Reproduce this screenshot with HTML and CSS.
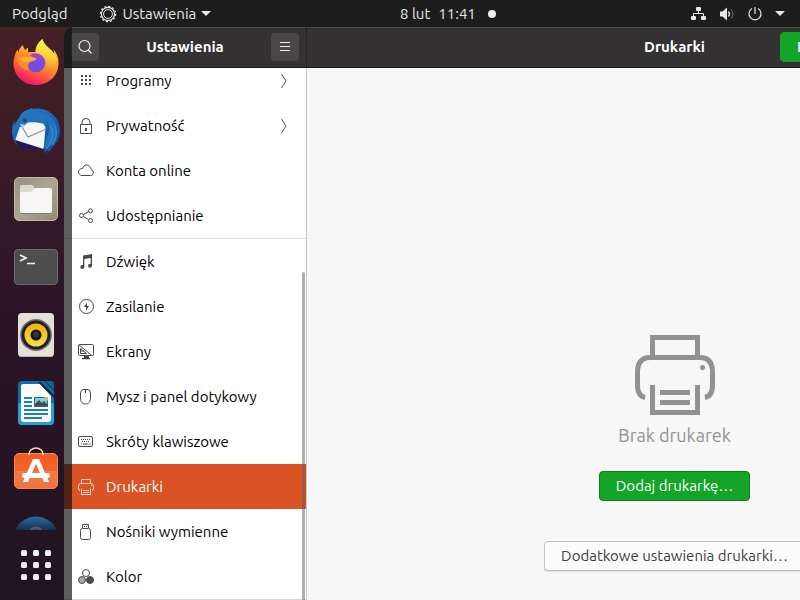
FILE: index.html
```html
<!DOCTYPE html>
<html lang="pl">
<head>
<meta charset="utf-8">
<title>Ustawienia</title>
<link rel="stylesheet" href="styles.css">
</head>
<body>
<header class="topbar">
  <div class="topbar-left">
    <button class="panel-button">Podgląd</button>
    <button class="panel-button app-menu">
      <svg width="18" height="18" viewBox="0 0 18 18" fill="none" stroke="currentColor"><circle cx="9" cy="9" r="6.6" stroke-width="1.2"/><circle cx="9" cy="9" r="4.4" stroke-width="1"/><circle cx="9" cy="9" r="7.6" stroke-width="1.2" stroke-dasharray="2 1.98"/></svg>
      <span>Ustawienia</span>
      <svg width="10" height="6" viewBox="0 0 10 6"><path d="M0 0h10L5 5z" fill="currentColor"/></svg>
    </button>
  </div>
  <div class="topbar-right">
    <button class="panel-button clock"><span>8 lut</span><span>11:41</span><i class="dot"></i></button>
    <button class="panel-button status" aria-label="Stan systemu">
      <svg width="16" height="16" viewBox="0 0 16 16" fill="currentColor"><rect x="5" y="1" width="5" height="4" rx="1"/><rect x="0" y="10" width="5" height="4" rx="1"/><rect x="10" y="10" width="5" height="4" rx="1"/><path d="M2.500 10.500V7.500h10v3M7.500 5v3" fill="none" stroke="currentColor"/></svg>
      <svg width="16" height="16" viewBox="0 0 16 16"><path d="M1 5.500h2.500L8 1.500v13l-4.500-4H1z" fill="currentColor"/><path d="M9.500 5.500q2 2.500 0 5" fill="none" stroke="currentColor" stroke-width="1.300"/><path d="M12 3.500q4 4.500 0 9" fill="none" stroke="#777"/></svg>
      <svg width="16" height="16" viewBox="0 0 16 16" fill="none" stroke="currentColor" stroke-width="1.200"><path d="M5 2.600a6 6 0 1 0 6 0M8 1v7"/></svg>
      <svg width="10" height="6" viewBox="0 0 10 6"><path d="M0 0h10L5 5z" fill="currentColor"/></svg>
    </button>
  </div>
</header>

<div class="desktop">
  <nav class="dock" aria-label="Dok">
    <div class="dock-apps">
      <button class="dock-item" aria-label="Firefox">
        <svg width="48" height="48" viewBox="0 0 48 48">
          <defs>
            <linearGradient id="fx" x1=".8" y1=".05" x2=".35" y2="1"><stop offset="0" stop-color="#fff04a"/><stop offset=".35" stop-color="#ffae2c"/><stop offset=".65" stop-color="#ff6a36"/><stop offset=".85" stop-color="#ff3650"/><stop offset="1" stop-color="#e8127a"/></linearGradient>
            <linearGradient id="fy" x1=".5" y1="0" x2=".4" y2="1"><stop offset="0" stop-color="#fff34f"/><stop offset=".5" stop-color="#ffd03a"/><stop offset="1" stop-color="#ff8a30" stop-opacity="0"/></linearGradient>
            <linearGradient id="fp" x1=".6" y1="0" x2=".5" y2="1"><stop offset="0" stop-color="#a43fd6"/><stop offset=".5" stop-color="#7a4be8"/><stop offset="1" stop-color="#6d50d8"/></linearGradient>
          </defs>
          <path d="M10.500 6C8 8.500 6.500 11 6.500 14l-1-3.500C3 14 1.500 20 1.500 25 2 37 11.500 46 24 46c13 0 22.500-9.500 22.500-22 0-5.500-2-10-5-13.500l1 5C39 9.500 32 7 30.500 0c-5 4-7 8-7 13L16 13V8.500l-3 2.500z" fill="url(#fx)"/>
          <path d="M30.500 0c-6 5-7.500 10-6.500 15 6 .5 10 4 10 10 0 4-2 7-5 9 8 0 14-5 15.500-12 .5-3-.5-5-2-7C39 9.500 32 7 30.500 0z" fill="url(#fy)"/>
          <circle cx="23.700" cy="23.800" r="9.500" fill="url(#fp)"/>
          <path d="M5 17c3-3 7-3.500 11-3.500 1.500 3 4 5 8.500 6-1 3-5 2.500-7 4-2 2-2 5 0 8-6 0-10.500-5-12.500-10z" fill="#ff8a2b"/>
          <path d="M7 19c5-1 12-1.500 17.500.5-2 2.500-5 2-8 3.500-4 .5-7-.5-9.500-4z" fill="#ffae35"/>
        </svg>
      </button>
      <button class="dock-item" aria-label="Thunderbird">
        <svg width="48" height="48" viewBox="0 0 48 48">
          <defs><linearGradient id="tb" x1=".2" y1="0" x2=".8" y2="1"><stop offset="0" stop-color="#2a7bc8"/><stop offset=".5" stop-color="#1b5fb4"/><stop offset="1" stop-color="#1c4a98"/></linearGradient></defs>
          <path d="M17 2.500c1-1 2-1.500 4-1.500l-1 1C35-1 48 9 48 24c0 9-5 14-9 18l-4 5 1-4-5 3 2-5-19-2v4C5 41 0 33 0 24c0-3 1-8 3-11l-1 6L8 9c2-4 5-6 9-6.500z" fill="url(#tb)"/>
          <path d="M3 32l15 4 13 6H15l-3 1C7 41 4 37 3 32z" fill="#211a55"/>
          <path d="M9.300 16C14 16 20 14 31 16.500L33.500 20 31.700 42 3.300 33z" fill="#f6f6f6"/>
          <path d="M9.500 19l6.500 11 17-7.500" fill="none" stroke="#8c9098" stroke-width="1.200"/>
          <path d="M8 20C7 12 11 5 18 3.500c8 0 15 4 16.500 15L30 16c-4-2-10-2.500-15 0-2 2-4 4-7 4z" fill="#2474c2"/>
          <path d="M23 7c8 1 16 8 14 18l-6 17C43 39 48 27 43 15 38 7 31 5 23 7z" fill="#2272bd"/>
          <path d="M38 18c5 8 2 18-4 24M43 19c3 8 1 14-3 19" fill="none" stroke="#3088cc" stroke-width="1.500"/>
          <path d="M8 17l6 1-4 3z" fill="#9bd8ee"/><circle cx="12.700" cy="13.300" r="2" fill="#2e4668"/>
        </svg>
      </button>
      <button class="dock-item" aria-label="Pliki">
        <svg width="48" height="48" viewBox="0 0 48 48">
          <defs><linearGradient id="fi" x1="0" y1="0" x2="1" y2="1"><stop offset="0" stop-color="#968f80"/><stop offset=".5" stop-color="#aca592"/><stop offset="1" stop-color="#918a7a"/></linearGradient></defs>
          <rect x="2.500" y="2.500" width="43" height="43" rx="4.500" fill="url(#fi)" stroke="#c0b9a8"/>
          <path d="M8 32V12q0-2 2-2h10q1 0 2 2l1 2h15q1 0 1 2v6z" fill="#dcd8d0"/>
          <path d="M8 19q0-2 2-2h8q1 0 3-2t3-2h14q2 0 2 2v21q0 2-2 2H10q-2 0-2-2z" fill="#f7f6f4"/>
          <path d="M9 38.500h30" stroke="#857e6f"/>
        </svg>
      </button>
      <button class="dock-item" aria-label="Terminal">
        <svg width="48" height="48" viewBox="0 0 48 48"><rect x="2.500" y="6.500" width="43" height="35" rx="3.500" fill="#4d4d4d" stroke="#6b6b6b"/><path d="M8 12l6 3-6 3" fill="none" stroke="#f2f2f2" stroke-width="1.700"/><path d="M15 20.500h8" stroke="#f2f2f2" stroke-width="1.500"/></svg>
      </button>
      <button class="dock-item" aria-label="Rhythmbox">
        <svg width="48" height="48" viewBox="0 0 48 48"><defs><linearGradient id="rb" x1="0" y1="0" x2="0" y2="1"><stop offset="0" stop-color="#efb40d"/><stop offset="1" stop-color="#fbdc46"/></linearGradient></defs><rect x="6" y="2" width="36" height="44" rx="4" fill="#e5e0d6"/><path d="M8 45.500h32" stroke="#b9b3a8"/><circle cx="24" cy="24" r="16" fill="#777"/><circle cx="24" cy="24" r="14.500" fill="#211e30"/><circle cx="24" cy="24" r="11.500" fill="url(#rb)"/><circle cx="24" cy="24" r="5.500" fill="#15151a"/><circle cx="24" cy="23.500" r="3" fill="#353535"/></svg>
      </button>
      <button class="dock-item" aria-label="LibreOffice Writer">
        <svg width="48" height="48" viewBox="0 0 48 48"><path d="M10 2h22l10 10v30q0 4-4 4H10q-4 0-4-4V6q0-4 4-4z" fill="#0d71a8"/><path d="M6 24h36v18q0 4-4 4H10q-4 0-4-4z" fill="#279fd8"/><path d="M33 2h6q3 0 3 3v6z" fill="#126293"/><path d="M11 5h17l11 12v23q0 3-3 3H12q-3 0-3-3V7q0-2 2-2z" fill="#fafafa"/><path d="M26 3h3l13 13v3z" fill="#10283e"/><path d="M12 19h8M12 23h8M12 27h8M12 31h24M12 35h24M12 39h18" stroke="#1d80ae" stroke-width="2"/><rect x="22.500" y="18.500" width="13" height="9" fill="#83c9ed" stroke="#14719e"/><path d="M23 27v-2l4-4 3 3 2-2 3 3v2z" fill="#4a4a43"/><path d="M32 18h4v4z" fill="#f0bc25"/></svg>
      </button>
      <button class="dock-item" aria-label="Ubuntu Software">
        <svg width="48" height="48" viewBox="0 0 48 48"><defs><linearGradient id="so" x1="0" y1="0" x2="0" y2="1"><stop offset="0" stop-color="#f4591f"/><stop offset=".5" stop-color="#f2652f"/><stop offset=".51" stop-color="#f47943"/><stop offset="1" stop-color="#ef7340"/></linearGradient></defs><rect x="2.500" y="6.500" width="43" height="35" rx="4.500" fill="url(#so)" stroke="#f58a58"/><path d="M17 8V7a7 6 0 0 1 14 0v1" fill="none" stroke="#f7deb0" stroke-width="1.600"/><path d="M21 12h6l10 23h-5l-1.500-4h-13L16 35h-5zM24 17l-4 9h8z" fill="#fff" fill-rule="evenodd"/><rect x="10" y="26" width="28" height="5" rx="2.500" fill="#fff"/></svg>
      </button>
      <button class="dock-item" aria-label="Pomoc">
        <svg width="48" height="48" viewBox="0 0 48 48"><defs><linearGradient id="he" x1="0" y1="0" x2="0" y2="1"><stop offset="0" stop-color="#2d69a2"/><stop offset=".3" stop-color="#172f4e"/></linearGradient></defs><circle cx="24" cy="24" r="22.500" fill="url(#he)"/><path d="M19 17q0-4 5-4t5 4q0 3-4 5v4" fill="none" stroke="#54596b" stroke-width="3"/></svg>
      </button>
    </div>
    <button class="show-apps" aria-label="Programy">
      <svg width="30" height="30" viewBox="0 0 30 30" fill="#eee"><rect width="6" height="6" rx="1.500"/><rect x="12" width="6" height="6" rx="1.500"/><rect x="24" width="6" height="6" rx="1.500"/><rect y="12" width="6" height="6" rx="1.500"/><rect x="12" y="12" width="6" height="6" rx="1.500"/><rect x="24" y="12" width="6" height="6" rx="1.500"/><rect y="24" width="6" height="6" rx="1.500"/><rect x="12" y="24" width="6" height="6" rx="1.500"/><rect x="24" y="24" width="6" height="6" rx="1.500"/></svg>
    </button>
  </nav>

  <div class="window">
    <aside class="sidebar">
      <div class="headerbar">
        <button class="header-button" aria-label="Szukaj"><svg width="16" height="16" viewBox="0 0 16 16" fill="none" stroke="currentColor" stroke-width="1.200"><circle cx="7.500" cy="7" r="5.500"/><path d="M11.300 11l3.200 3.500"/></svg></button>
        <h1>Ustawienia</h1>
        <button class="header-button" aria-label="Menu"><svg width="16" height="16" viewBox="0 0 16 16" stroke="currentColor"><path d="M3 3.500h10M3 7.500h10M3 11.500h10"/></svg></button>
      </div>
      <div class="list-area">
        <ul class="list">
          <li><a href="#programy"><svg class="icon" viewBox="0 0 16 16"><path d="M3 3h2M7 3h2M11 3h2M3 7h2M7 7h2M11 7h2M3 11h2M7 11h2M11 11h2" stroke-width="2"/></svg><span>Programy</span><svg class="chevron" viewBox="0 0 8 16"><path d="M1.500 1l4.500 7-4.500 7"/></svg></a></li>
          <li><a href="#prywatnosc"><svg class="icon" viewBox="0 0 16 16"><path d="M2.500 6.500h11v9h-11zM4 6.500V4a4 3.500 0 0 1 8 0v2.500"/><path d="M7 10h2v3H7z" fill="currentColor" stroke="none"/></svg><span>Prywatność</span><svg class="chevron" viewBox="0 0 8 16"><path d="M1.500 1l4.500 7-4.500 7"/></svg></a></li>
          <li><a href="#konta"><svg class="icon" viewBox="0 0 16 16"><path d="M4 12.500h8.500a3 3 0 0 0 .7-5.900C13 4 11 2 8.700 2 6.500 2 5 3.500 4.600 5.500 2 5.500.500 7 .500 9c0 2 1.500 3.500 3.500 3.500z"/></svg><span>Konta online</span></a></li>
          <li><a href="#udostepnianie"><svg class="icon" viewBox="0 0 16 16"><circle cx="3.500" cy="7.500" r="2"/><circle cx="12.500" cy="2.800" r="2"/><circle cx="12.500" cy="12.500" r="2"/><path d="M5.500 6.500l5-2.800M5.500 8.500l5 3"/></svg><span>Udostępnianie</span></a></li>
          <li class="section"><a href="#dzwiek"><svg class="icon" viewBox="0 0 16 16"><path d="M5 1.500L14 0v11.500h-1.300V4L6.300 5v8H5z" fill="currentColor" stroke="none"/><g fill="currentColor" stroke="none"><circle cx="4.300" cy="13" r="2"/><circle cx="12" cy="11.800" r="2"/></g></svg><span>Dźwięk</span></a></li>
          <li><a href="#zasilanie"><svg class="icon" viewBox="0 0 16 16"><circle cx="8.500" cy="7.500" r="7"/><path d="M9 3.500L6 8h2v3.500L11 7H9z" fill="currentColor" stroke="none"/></svg><span>Zasilanie</span></a></li>
          <li><a href="#ekrany"><svg class="icon" viewBox="0 0 16 16"><rect x=".5" y=".5" width="15" height="11" rx="1"/><path d="M1 1l13 10.500M2.500 4.500v5h6zM3 7h3"/><path d="M6 12h5v2h1v1.300H4V14h2z" fill="currentColor" stroke="none"/></svg><span>Ekrany</span></a></li>
          <li><a href="#mysz"><svg class="icon" viewBox="0 0 16 16"><path d="M5 .500h5Q12 .500 12.500 4v5c0 4-2 6-5 6s-5-2-5-6V4Q3 .500 5 .500zM7.500.500V4"/></svg><span>Mysz i panel dotykowy</span></a></li>
          <li><a href="#skroty"><svg class="icon" viewBox="0 0 16 16"><rect x=".5" y="2.500" width="14" height="10" rx="1.500"/><path d="M3 5.500h10M4 7.500h8" stroke-dasharray="1 1"/><path d="M3 10h1M5 10h5.500M11.500 10h1"/></svg><span>Skróty klawiszowe</span></a></li>
          <li><a href="#drukarki" class="selected" aria-current="page"><svg class="icon" viewBox="0 0 16 16"><path d="M3.500 4V.500h9V4M2 11.500Q.500 11.500.500 9V7Q.500 4.500 3 4.500h10Q15.500 4.500 15.500 7v2q0 2.500-1.500 2.500M3.500 9.500v6h9v-6M5 11.500h6M5 13.500h6"/><path d="M13 6h1v1h-1z" fill="currentColor" stroke="none"/></svg><span>Drukarki</span></a></li>
          <li><a href="#nosniki"><svg class="icon" viewBox="0 0 16 16"><path d="M4.500 4V.500h6V4M6 2.500h1M8 2.500h1"/><rect x="2.500" y="4.500" width="10" height="11" rx="2"/></svg><span>Nośniki wymienne</span></a></li>
          <li class="last"><a href="#kolor"><svg class="icon" viewBox="0 0 16 16"><circle cx="8" cy="4" r="3.500"/><circle cx="4" cy="11" r="3.500" fill="#aaa"/><circle cx="12" cy="11" r="3.500" fill="currentColor"/></svg><span>Kolor</span></a></li>
        </ul>
        <div class="scrollbar"></div>
      </div>
    </aside>
    <main class="content">
      <div class="headerbar main-header">
        <h2>Drukarki</h2>
        <button class="button primary">Dodaj drukarkę…</button>
      </div>
      <section class="empty">
        <svg class="printer" width="80" height="80" viewBox="0 0 16 16" fill="none" stroke="currentColor"><path d="M3.500 4V.500h9V4M2 12.500Q.500 12.200.500 10V7.500Q.500 4.500 3 4.500h10Q15.500 4.500 15.500 7.500V10q0 2.200-1.500 2.500M3.500 10v5.500h9V10M5 11.500h6M5 13.500h6"/><circle cx="13.500" cy="6.500" r=".5" fill="currentColor" stroke="none"/></svg>
        <p>Brak drukarek</p>
        <button class="button primary">Dodaj drukarkę…</button>
        <button class="button extra">Dodatkowe ustawienia drukarki…</button>
      </section>
    </main>
  </div>
</div>
</body>
</html>
```
FILE: styles.css
```css
* { box-sizing: border-box; }
body {
  margin: 0;
  height: 100vh;
  display: flex;
  flex-direction: column;
  overflow: hidden;
  font: 15px/20px Ubuntu, "Noto Sans", sans-serif;
  color: #000;
}
button { font: inherit; color: inherit; border: 0; background: none; padding: 0; margin: 0; }
svg { display: block; flex: none; }
h1, h2, p, ul { margin: 0; padding: 0; }
h1, h2 { font-size: 15px; font-weight: 700; color: #fff; }

.topbar {
  display: grid;
  grid-template-columns: 1fr 1fr;
  flex: none;
  height: 27px;
  background: #1d1d1d;
  color: #e8e8e8;
}
.topbar-left, .topbar-right, .panel-button { display: flex; align-items: center; }
.topbar-left { padding-left: 12px; gap: 32px; }
.app-menu { gap: 5px; }
.topbar-right { justify-content: space-between; padding-right: 15px; }
.clock { gap: 8px; }
.dot { width: 8px; height: 8px; margin-left: 4px; border-radius: 50%; background: #eee; }
.status { gap: 12px; }

.desktop {
  flex: 1;
  min-height: 0;
  display: grid;
  grid-template-columns: 64px 1fr;
  grid-template-rows: 100%;
  overflow: hidden;
  background: linear-gradient(#b4404c, #651a59 50%, #401a40);
}
.dock {
  z-index: 1;
  width: 72px;
  display: flex;
  flex-direction: column;
  background: rgba(17, 17, 17, .68);
}
.dock-apps { flex: 1; min-height: 0; overflow: hidden; padding-top: 2px; }
.dock-item { display: flex; align-items: center; justify-content: center; width: 100%; height: 68px; }
.show-apps { flex: none; display: flex; align-items: center; justify-content: center; height: 70px; }

.window {
  display: grid;
  grid-template-columns: 243px 1fr;
  grid-template-rows: 100%;
  min-width: 978px;
  border-radius: 8px 0 0 0;
  overflow: hidden;
  background: #f7f7f7;
}
.sidebar {
  display: flex;
  flex-direction: column;
  background: #fff;
  border-right: 1px solid #c8c8c8;
}
.headerbar {
  flex: none;
  display: flex;
  align-items: center;
  justify-content: space-between;
  height: 41px;
  padding: 0 7px 2px;
  border-top: 1px solid #484647;
  border-bottom: 1px solid #1b1b1b;
  background: #333132;
}
.sidebar .headerbar { margin-right: -1px; border-right: 1px solid #222; }
.header-button {
  display: flex;
  align-items: center;
  justify-content: center;
  width: 28px;
  height: 28px;
  border-radius: 4px;
  background: #4a4846;
  color: #f0f0f0;
}
.list-area {
  position: relative;
  flex: 1;
  min-height: 0;
  display: flex;
  flex-direction: column;
  justify-content: flex-end;
  overflow: hidden;
}
.list { list-style: none; }
.list a {
  display: flex;
  align-items: center;
  gap: 12px;
  height: 45px;
  padding: 0 18px 0 14px;
  color: #000;
  text-decoration: none;
}
.list a span { flex: 1; }
.section { border-top: 1px solid #e0e0e0; }
.last { border-bottom: 1px solid #d8d8d8; }
.list .selected { background: #d95324; color: #fff; }
.icon { width: 16px; height: 16px; color: #4a4a4a; stroke: currentColor; fill: none; }
.selected .icon { color: #f6d3c5; }
.chevron { width: 8px; height: 16px; fill: none; stroke: #555; }
.scrollbar {
  position: absolute;
  top: 204px;
  right: 1px;
  bottom: 0;
  width: 3px;
  border-radius: 3px 3px 0 0;
  background: rgba(95, 95, 95, .5);
}

.content { display: flex; flex-direction: column; }
.main-header { display: grid; grid-template-columns: 1fr auto 1fr; }
.main-header h2 { grid-column: 2; }
.main-header .button { justify-self: start; margin-left: 75px; border-color: #13a428; font-weight: 700; }
.button {
  height: 30px;
  padding: 0 16px;
  border: 1px solid #bfbfbf;
  border-radius: 4px;
  background: #fcfcfc;
  color: #3d3d3d;
  white-space: nowrap;
}
.primary { border-color: #0f7a1f; background: #13a428; color: #fff; }
.empty {
  display: flex;
  flex-direction: column;
  align-items: center;
  padding-top: 267px;
  color: #929292;
}
.empty p { margin: 8px 0 24px; font-size: 18px; line-height: 24px; }
.extra { margin-top: 40px; box-shadow: 0 1px 1px rgba(0, 0, 0, .1); }
```
